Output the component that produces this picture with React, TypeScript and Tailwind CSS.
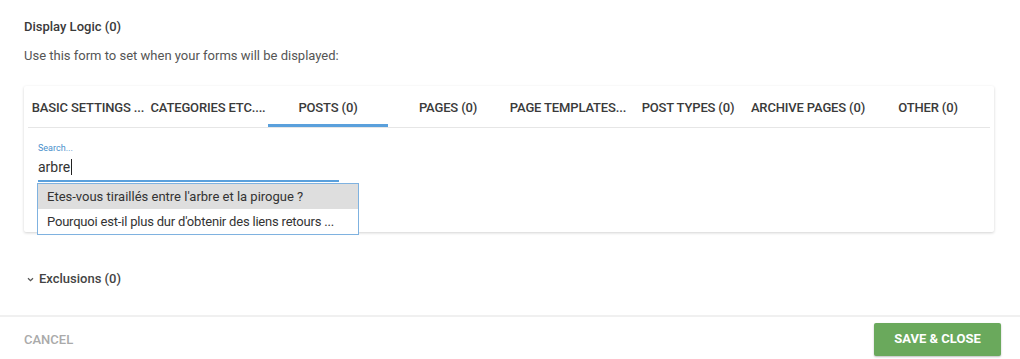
import React from 'react'

const tabs = [
  'BASIC SETTINGS ...',
  'CATEGORIES ETC....',
  'POSTS (0)',
  'PAGES (0)',
  'PAGE TEMPLATES...',
  'POST TYPES (0)',
  'ARCHIVE PAGES (0)',
  'OTHER (0)',
]

const results = [
  "Etes-vous tiraillés entre l'arbre et la pirogue ?",
  "Pourquoi est-il plus dur d'obtenir des liens retours ...",
]

export default function App() {
  return (
    <div className="w-[1020px] h-[359px] bg-white overflow-hidden font-['Roboto',sans-serif] text-[#333]">
      <div className="px-[24px] pt-[20px]">
        <h3 className="text-[13px] leading-[14px] font-medium text-[#3a3a3a]">Display Logic (0)</h3>
        <p className="mt-[15px] text-[13px] leading-[14px] text-[#555]">Use this form to set when your forms will be displayed:</p>
      </div>

      <div className="ml-[24px] mt-[23px] w-[970px] h-[146px] bg-white rounded-[2px] shadow-[0_1px_3px_rgba(0,0,0,0.18)] relative">
        <div className="mx-[4px] flex border-b border-[#e6e6e6] h-[42px]">
          {tabs.map((t, i) => (
            <div
              key={t}
              className={
                'w-[120px] shrink-0 flex items-center justify-center text-[13px] tracking-[-0.15px] font-medium whitespace-nowrap text-[#3a3a3a] ' +
                (i === 2 ? 'border-b-[3px] border-[#5aa0dc] pt-[6px]' : 'pt-[3px]')
              }
            >
              {t}
            </div>
          ))}
        </div>

        <div className="px-[14px] pt-[15px] relative">
          <div className="text-[9px] leading-[10px] text-[#4a8fcb]">Search...</div>
          <div className="mt-[6px] w-[301px] h-[23px] border-b-[2px] border-[#5aa0dc] text-[14px] leading-[16px] text-[#333] flex items-start">
            arbre<span className="inline-block w-px h-[16px] bg-[#222] ml-px" />
          </div>
          <div className="absolute left-[13px] top-[55px] w-[322px] bg-white border border-[#7fb2e0] text-[13px] text-[#333]">
            {results.map((r, i) => (
              <div
                key={r}
                className={
                  'h-[25px] flex items-center px-[9px] whitespace-nowrap ' +
                  (i === 0 ? 'bg-[#dedede]' : 'tracking-[-0.2px]')
                }
              >
                {r}
              </div>
            ))}
          </div>
        </div>
      </div>

      <div className="px-[27px] mt-[40px] h-[14px] flex items-center gap-[5px] text-[13px] font-medium text-[#444]">
        <svg width="7" height="5" viewBox="0 0 7 5" className="mt-[1px]">
          <path d="M1 1.2 L3.5 3.6 L6 1.2" fill="none" stroke="#555" strokeWidth="1.3" />
        </svg>
        <span>Exclusions (0)</span>
      </div>

      <div className="mt-[29px] border-t-2 border-[#f0f0f0] flex items-center justify-between pl-[24px] pr-[19px] h-[42px]">
        <span className="mt-[6px] text-[13px] font-medium text-[#aaa]">CANCEL</span>
        <button className="w-[127px] h-[33px] mt-[4px] bg-[#6aa95c] rounded-[2px] text-white text-[13px] font-bold shadow-[0_1px_2px_rgba(0,0,0,0.25)]">
          SAVE &amp; CLOSE
        </button>
      </div>
    </div>
  )
}
